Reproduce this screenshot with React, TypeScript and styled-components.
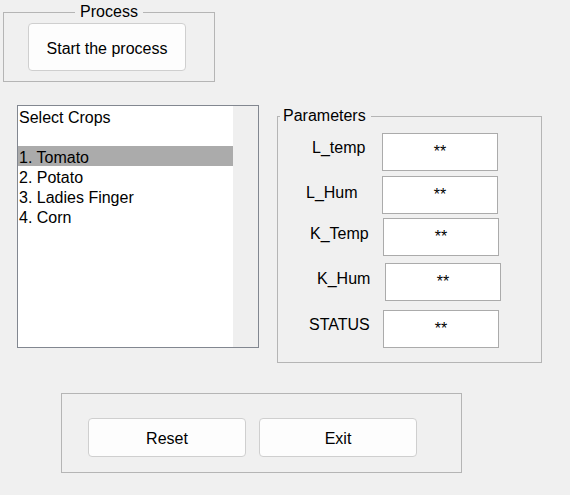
import styled, { createGlobalStyle } from "styled-components";

const crops = ["Select Crops", "", "1. Tomato", "2. Potato", "3. Ladies Finger", "4. Corn"];

const params = [
  { label: "L_temp", lx: 34, ly: 6, bx: 0, mt: 8 },
  { label: "L_Hum", lx: 28, ly: 8, bx: 0, mt: 5 },
  { label: "K_Temp", lx: 32, ly: 7, bx: 1, mt: 4 },
  { label: "K_Hum", lx: 39, ly: 7, bx: 3, mt: 7 },
  { label: "STATUS", lx: 31, ly: 6, bx: 1, mt: 9 },
];

function App() {
  return (
    <>
      <GlobalStyle />
      <Page>
        <ProcessPanel>
          <CenteredLegend>Process</CenteredLegend>
          <ProcessBody>
            <PushButton $h={48}>Start the process</PushButton>
          </ProcessBody>
        </ProcessPanel>

        <Middle>
          <ListBox>
            <ListArea>
              {crops.map((c, i) => (
                <ListItem key={i} $selected={i === 2}>
                  {c}
                </ListItem>
              ))}
            </ListArea>
            <Gutter />
          </ListBox>

          <ParamsPanel>
            <LeftLegend>Parameters</LeftLegend>
            {params.map((p) => (
              <ParamRow key={p.label} $mt={p.mt}>
                <ParamLabel $lx={p.lx} $ly={p.ly}>
                  {p.label}
                </ParamLabel>
                <ValueBox $bx={p.bx}>**</ValueBox>
              </ParamRow>
            ))}
          </ParamsPanel>
        </Middle>

        <BottomPanel>
          <PushButton $h={39}>Reset</PushButton>
          <PushButton $h={39}>Exit</PushButton>
        </BottomPanel>
      </Page>
    </>
  );
}

const GlobalStyle = createGlobalStyle`
body{
  margin:0;
  background-color:#f0f0f0;
  font-family:"Liberation Sans", Arial, sans-serif;
  color:#000;
}`;

const Page = styled.div`
  width: 570px;
  height: 495px;
  background: #f0f0f0;
  display: flex;
  flex-direction: column;
  align-items: flex-start;
`;

const Panel = styled.fieldset`
  box-sizing: border-box;
  margin: 0;
  padding: 0;
  min-width: 0;
  border: 1px solid #b5b5b5;
`;

const Legend = styled.legend`
  font-size: 16px;
  line-height: 18px;
`;
const CenteredLegend = styled(Legend)`
  margin: 0 auto;
  padding: 0 5px;
`;
const LeftLegend = styled(Legend)`
  margin-left: 2px;
  padding: 0 5px 0 3px;
`;

const ProcessPanel = styled(Panel)`
  margin: 3px 0 0 3px;
  width: 212px;
  height: 79px;
`;
const ProcessBody = styled.div`
  padding: 2px 0 0 24px;
`;

const PushButton = styled.button<{ $h: number }>`
  box-sizing: border-box;
  width: 158px;
  height: ${(p) => p.$h}px;
  padding: 3px 0 0;
  background: #fdfdfd;
  border: 1px solid #cfcfcf;
  border-radius: 4px;
  font-family: inherit;
  font-size: 16px;
  color: #000;
`;

const Middle = styled.div`
  display: flex;
  align-items: flex-start;
`;

const ListBox = styled.div`
  box-sizing: border-box;
  margin: 23px 0 0 17px;
  width: 242px;
  height: 243px;
  border: 1px solid #828790;
  display: flex;
`;
const ListArea = styled.div`
  flex: 1;
  background: #fff;
`;
const Gutter = styled.div`
  width: 25px;
  background: #efefef;
`;
const ListItem = styled.div<{ $selected: boolean }>`
  box-sizing: border-box;
  height: 20px;
  padding: 3px 0 0 1px;
  font-size: 16px;
  line-height: 17px;
  white-space: nowrap;
  background: ${(p) => (p.$selected ? "#ababab" : "transparent")};
`;

const ParamsPanel = styled(Panel)`
  margin: 25px 0 0 18px;
  width: 265px;
  height: 256px;
`;
const ParamRow = styled.div<{ $mt: number }>`
  display: grid;
  grid-template-columns: 104px auto;
  align-items: start;
  margin-top: ${(p) => p.$mt}px;
`;
const ParamLabel = styled.div<{ $lx: number; $ly: number }>`
  padding-left: ${(p) => p.$lx}px;
  margin-top: ${(p) => p.$ly}px;
  font-size: 16px;
  line-height: 18px;
  white-space: nowrap;
`;
const ValueBox = styled.div<{ $bx: number }>`
  box-sizing: border-box;
  margin-left: ${(p) => p.$bx}px;
  width: 116px;
  height: 38px;
  border: 1px solid #ababab;
  background: #fff;
  display: flex;
  align-items: center;
  justify-content: center;
  font-size: 16px;
  line-height: 18px;
`;

const BottomPanel = styled.div`
  box-sizing: border-box;
  margin: 30px 0 0 61px;
  width: 401px;
  height: 80px;
  border: 1px solid #b5b5b5;
  display: flex;
  align-items: flex-start;
  gap: 13px;
  padding: 24px 0 0 26px;
`;

export default App;
